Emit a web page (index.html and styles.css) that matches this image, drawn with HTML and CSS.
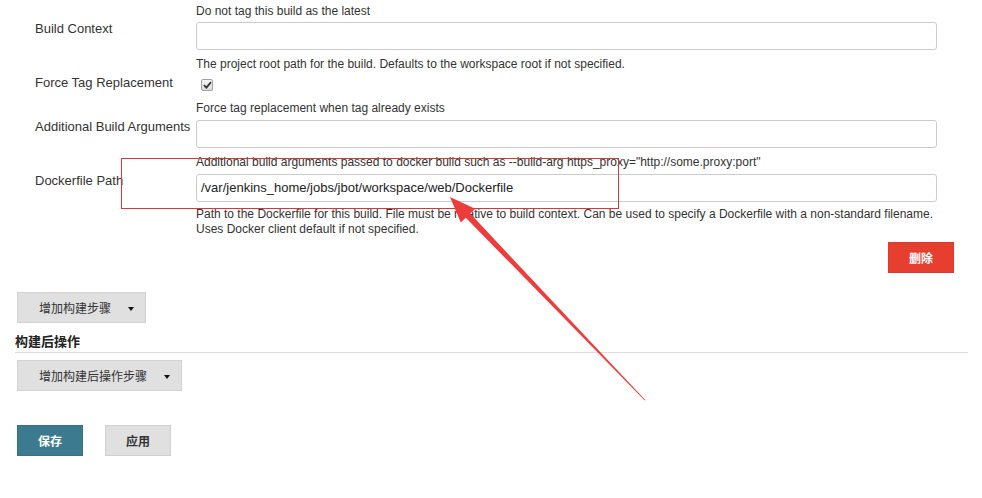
FILE: index.html
```html
<!DOCTYPE html>
<html>
<head>
<meta charset="utf-8">
<link rel="stylesheet" href="styles.css">
</head>
<body>
<div class="page">
  <div class="form">
    <div class="row">
      <div class="label"></div>
      <div class="field"><div class="help first">Do not tag this build as the latest</div></div>
    </div>
    <div class="row gap3">
      <div class="label">Build Context</div>
      <div class="field"><div class="input"></div></div>
    </div>
    <div class="row gap6">
      <div class="label"></div>
      <div class="field"><div class="help">The project root path for the build. Defaults to the workspace root if not specified.</div></div>
    </div>
    <div class="row gap3 checkrow">
      <div class="label">Force Tag Replacement</div>
      <div class="field"><span class="checkbox"><svg width="9" height="8" viewBox="0 0 9 8"><path d="M1 4.2 L3.4 6.6 L8 1.2" fill="none" stroke="#333" stroke-width="1.8"/></svg></span></div>
    </div>
    <div class="row gap5">
      <div class="label"></div>
      <div class="field"><div class="help">Force tag replacement when tag already exists</div></div>
    </div>
    <div class="row gap4">
      <div class="label">Additional Build Arguments</div>
      <div class="field"><div class="input"></div></div>
    </div>
    <div class="row gap6">
      <div class="label"></div>
      <div class="field"><div class="help">Additional build arguments passed to docker build such as --build-arg https_proxy="http://some.proxy:port"</div></div>
    </div>
    <div class="row gap4">
      <div class="label">Dockerfile Path</div>
      <div class="field"><div class="input">/var/jenkins_home/jobs/jbot/workspace/web/Dockerfile</div></div>
    </div>
    <div class="row gap5">
      <div class="label"></div>
      <div class="field"><div class="help two">Path to the Dockerfile for this build. File must be relative to build context. Can be used to specify a Dockerfile with a non-standard filename. Uses Docker client default if not specified.</div></div>
    </div>
    <div class="delete-row">
      <button class="btn btn-danger">删除</button>
    </div>
  </div>

  <div class="section">
    <button class="btn btn-gray dropdown add-step">增加构建步骤<span class="caret"></span></button>
    <div class="heading">构建后操作</div>
    <button class="btn btn-gray dropdown add-post">增加构建后操作步骤<span class="caret"></span></button>
    <div class="actions">
      <button class="btn btn-primary">保存</button>
      <button class="btn btn-light">应用</button>
    </div>
  </div>
</div>

<div class="highlight"></div>
<svg class="arrow" width="982" height="498" viewBox="0 0 982 498">
  <polygon points="450,197 475.2,208.8 470.2,213.6 645.3,400 644.7,400.4 465.8,217.8 460.8,222.6" fill="#ee3b3b"/>
</svg>
</body>
</html>
```

FILE: styles.css
```css
html, body {
  margin: 0;
  padding: 0;
  background: #fff;
}
body {
  font-family: "Liberation Sans", Arial, "Noto Sans CJK SC", sans-serif;
  color: #333;
  font-size: 13px;
  width: 982px;
  height: 498px;
  overflow: hidden;
  position: relative;
}
.page {
  padding-top: 3px;
}
.form {
  padding-left: 35px;
  width: 902px;
}
.row {
  display: flex;
}
.gap3 { margin-top: 3px; }
.gap4 { margin-top: 4px; }
.gap5 { margin-top: 5px; }
.gap6 { margin-top: 6px; }
.label {
  width: 161px;
  flex: none;
  font-size: 13px;
  line-height: 14px;
  color: #333;
  white-space: nowrap;
}
.field {
  flex: 1;
}
.help {
  font-size: 12px;
  line-height: 16px;
  color: #333;
}
.help.two {
  line-height: 15px;
}
.input {
  box-sizing: border-box;
  height: 28px;
  border: 1px solid #ccc;
  border-radius: 3px;
  padding: 0 4px;
  font-size: 13px;
  line-height: 26px;
  color: #222;
  background: #fff;
}
.checkrow {
  height: 20px;
}
.checkrow .label {
  padding-top: 1px;
}
.checkbox {
  display: inline-flex;
  align-items: center;
  justify-content: center;
  box-sizing: border-box;
  width: 12px;
  height: 12px;
  margin: 4px 0 0 5px;
  border: 1px solid #a0a0a0;
  border-radius: 2px;
  background: linear-gradient(#f4f4f4, #dcdcdc);
}
.delete-row {
  display: flex;
  justify-content: flex-end;
  margin-top: 5px;
  width: 919px;
}
.btn {
  box-sizing: border-box;
  height: 31px;
  border: 1px solid transparent;
  border-radius: 0;
  font-family: "Noto Sans CJK SC", "Liberation Sans", sans-serif;
  font-size: 12px;
  padding: 0;
  display: inline-flex;
  align-items: center;
  cursor: pointer;
}
.btn-danger {
  width: 66px;
  justify-content: center;
  background: #e73f2f;
  border-color: #dc3a2a;
  color: #fff;
  font-weight: bold;
}
.section {
  padding-left: 17px;
}
.btn-gray {
  background: #e0e0e0;
  border-color: #d2d2d2;
  color: #333;
}
.dropdown {
  padding-left: 21px;
  position: relative;
}
.add-step {
  margin-top: 19px;
  width: 129px;
  display: flex;
}
.add-post {
  margin-top: 7px;
  width: 165px;
  display: flex;
}
.caret {
  position: absolute;
  right: 11px;
  top: 14px;
  width: 0;
  height: 0;
  border-left: 3.5px solid transparent;
  border-right: 3.5px solid transparent;
  border-top: 4px solid #111;
}
.heading {
  margin-top: 10px;
  margin-left: -2px;
  width: 953px;
  font-family: "Noto Sans CJK SC", "Liberation Sans", sans-serif;
  font-weight: bold;
  font-size: 13px;
  line-height: 16px;
  padding-bottom: 3px;
  border-bottom: 1px solid #ddd;
  color: #222;
}
.actions {
  margin-top: 34px;
  display: flex;
  gap: 22px;
}
.btn-primary {
  width: 66px;
  justify-content: center;
  background: #3c7a8f;
  border-color: #36708a;
  color: #fff;
  font-weight: bold;
}
.btn-light {
  width: 66px;
  justify-content: center;
  background: #e0e0e0;
  border-color: #d0d0d0;
  color: #333;
  font-weight: bold;
}
.highlight {
  position: absolute;
  left: 121px;
  top: 158px;
  width: 496px;
  height: 49px;
  border: 1px solid #d9383a;
  pointer-events: none;
}
.arrow {
  position: absolute;
  left: 0;
  top: 0;
  pointer-events: none;
}
```
